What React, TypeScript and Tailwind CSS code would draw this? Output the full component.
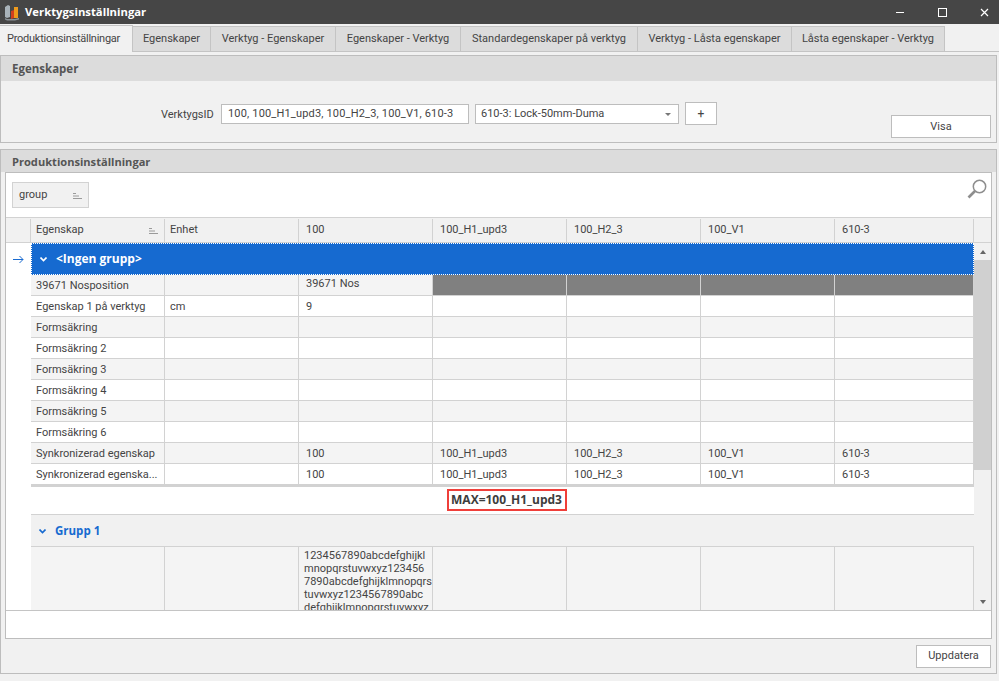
const COLS = 'grid grid-cols-[25px_134px_134px_134px_134px_134px_134px_139px]';

const tabs = [
  { label: 'Egenskaper', w: 'w-[78px]' },
  { label: 'Verktyg - Egenskaper', w: 'w-[125px]' },
  { label: 'Egenskaper - Verktyg', w: 'w-[125px]' },
  { label: 'Standardegenskaper på verktyg', w: 'w-[177px]' },
  { label: 'Verktyg - Låsta egenskaper', w: 'w-[154px]' },
  { label: 'Låsta egenskaper - Verktyg', w: 'w-[153px]' },
];

const columns = ['Enhet', '100', '100_H1_upd3', '100_H2_3', '100_V1', '610-3'];

const longText = [
  '1234567890abcdefghijkl',
  'mnopqrstuvwxyz123456',
  '7890abcdefghijklmnopqrs',
  'tuvwxyz1234567890abc',
  'defghijklmnopqrstuvwxyz',
];

type Row = { cells: string[]; dark?: boolean };

const rows: Row[] = [
  { cells: ['39671 Nosposition', '', '39671 Nos'], dark: true },
  { cells: ['Egenskap 1 på verktyg', 'cm', '9', '', '', '', ''] },
  { cells: ['Formsäkring', '', '', '', '', '', ''] },
  { cells: ['Formsäkring 2', '', '', '', '', '', ''] },
  { cells: ['Formsäkring 3', '', '', '', '', '', ''] },
  { cells: ['Formsäkring 4', '', '', '', '', '', ''] },
  { cells: ['Formsäkring 5', '', '', '', '', '', ''] },
  { cells: ['Formsäkring 6', '', '', '', '', '', ''] },
  { cells: ['Synkronizerad egenskap', '', '100', '100_H1_upd3', '100_H2_3', '100_V1', '610-3'] },
  { cells: ['Synkronizerad egenska...', '', '100', '100_H1_upd3', '100_H2_3', '100_V1', '610-3'] },
];

function SortIcon() {
  return (
    <svg width="9" height="8" viewBox="0 0 9 8" className="shrink-0">
      <path d="M0 1.5h3M0 4h6M0 6.5h9" stroke="#9a9a9a" strokeWidth="1" fill="none" />
    </svg>
  );
}

function Chevron({ color }: { color: string }) {
  return (
    <svg width="7" height="5" viewBox="0 0 7 5" className="shrink-0">
      <path d="M0.5 0.5L3.5 3.5L6.5 0.5" stroke={color} strokeWidth="1.6" fill="none" />
    </svg>
  );
}

function Logo() {
  return (
    <svg width="16" height="17" viewBox="0 0 16 17" className="shrink-0">
      <path d="M1 3l3-2 2 1v11l-3 1-2-1z" fill="#a9b3ba" />
      <path d="M7 7l3-1v8l-3 1z" fill="#d2401f" />
      <path d="M10 3h4v11h-4z" fill="#ee9a1c" />
      <path d="M1 14l2 1 8 0 4-1v1.5l-4 1H3l-2-1z" fill="#8b9297" />
    </svg>
  );
}

function GridRow({ row, index }: { row: Row; index: number }) {
  const bg = index % 2 === 0 ? 'bg-[#f4f4f4]' : 'bg-white';
  return (
    <div className={`${COLS} h-[21px] text-[11px] text-[#444]`}>
      <div className="bg-white" />
      {row.cells.map((c, i) => (
        <div
          key={i}
          className={`${bg} border-r border-b border-[#d2d2d2] whitespace-nowrap overflow-hidden ${
            i < 2 ? 'pl-[5px]' : 'pl-[7px]'
          } ${row.dark && i === 2 ? 'leading-[17px]' : 'leading-[21px]'}`}
        >
          {c}
        </div>
      ))}
      {row.dark &&
        [0, 1, 2, 3].map((i) => <div key={i} className="bg-[#808080] border-r border-b border-[#d2d2d2]" />)}
    </div>
  );
}

export default function App() {
  return (
    <div className="w-[999px] h-[681px] overflow-hidden bg-[#f1f1f1] flex flex-col text-[#444] font-['Roboto','Open_Sans',sans-serif]">
      {/* titelrad */}
      <div className="h-[24px] shrink-0 bg-[#464646] flex items-center pl-[4px] text-white">
        <Logo />
        <span className="ml-[5px] text-[11.3px] font-bold font-['Open_Sans',sans-serif]">Verktygsinställningar</span>
        <div className="ml-auto flex items-center gap-[12px]">
          <div className="w-[30px] flex justify-center">
            <div className="w-[8px] h-px bg-white" />
          </div>
          <div className="w-[30px] flex justify-center">
            <div className="w-[9px] h-[9px] border border-white" />
          </div>
          <div className="w-[30px] flex justify-center">
            <svg width="9" height="9" viewBox="0 0 9 9">
              <path d="M1 1l7 7M8 1l-7 7" stroke="#fff" strokeWidth="1.2" />
            </svg>
          </div>
        </div>
      </div>

      {/* flikar */}
      <div className="h-[28px] shrink-0 flex items-end border-b border-[#c4c4c4] bg-[#f1f1f1]">
        <div className="w-[133px] h-[27px] -mb-px bg-[#f1f1f1] border-t border-r border-[#c4c4c4] pl-[7px] flex items-center text-[11px] tracking-[-0.25px] whitespace-nowrap">
          Produktionsinställningar
        </div>
        {tabs.map((t) => (
          <div
            key={t.label}
            className={`${t.w} h-[25px] bg-[#dcdcdc] border-t border-r border-[#c4c4c4] flex items-center justify-center text-[11px] whitespace-nowrap`}
          >
            {t.label}
          </div>
        ))}
      </div>

      {/* egenskaper */}
      <div className="mt-[3px] mr-[2px] h-[88px] shrink-0 border border-[#bdbdbd] flex flex-col">
        <div className="h-[25px] bg-[#dcdcdc] pl-[11px] flex items-center text-[11.5px] font-bold text-[#555] font-['Open_Sans',sans-serif]">Egenskaper</div>
        <div className="flex-1 relative flex items-start pt-[23px] pl-[160px]">
          <span className="w-[60px] text-[11px] mt-[3px]">VerktygsID</span>
          <div className="w-[248px] h-[20px] bg-white border border-[#bdbdbd] pl-[6px] flex items-center text-[11px] tracking-[0.17px] whitespace-nowrap">
            100, 100_H1_upd3, 100_H2_3, 100_V1, 610-3
          </div>
          <div className="w-[204px] h-[20px] ml-[6px] bg-white border border-[#bdbdbd] pl-[5px] pr-[7px] flex items-center justify-between text-[11px]">
            <span>610-3: Lock-50mm-Duma</span>
            <span className="w-0 h-0 border-x-[3px] border-x-transparent border-t-[3px] border-t-[#777]" />
          </div>
          <div className="w-[32px] h-[23px] -mt-[2px] ml-[6px] bg-white border border-[#bdbdbd] flex items-center justify-center text-[12px]">+</div>
          <div className="absolute right-[5px] bottom-[4px] w-[100px] h-[23px] pt-px bg-white border border-[#bdbdbd] flex items-center justify-center text-[11px]">Visa</div>
        </div>
      </div>

      {/* produktionsinställningar */}
      <div className="mt-[6px] mr-[2px] h-[525px] shrink-0 border border-[#bdbdbd] flex flex-col">
        <div className="h-[22px] shrink-0 bg-[#dcdcdc] pl-[11px] pt-[2px] flex items-center text-[11.1px] font-bold text-[#555] font-['Open_Sans',sans-serif]">Produktionsinställningar</div>
        <div className="mx-[4px] w-[987px] h-[467px] bg-white border border-[#bdbdbd] flex flex-col">
          <div className="h-[44px] shrink-0 relative pt-[9px] pl-[6px]">
            <div className="w-[77px] h-[26px] pt-px bg-[#f1f1f1] border border-[#d2d2d2] flex items-center justify-between pl-[6px] pr-[6px] text-[11px]">
              group
              <SortIcon />
            </div>
            <svg width="20" height="20" viewBox="0 0 20 20" className="absolute right-[4px] top-[6px]">
              <circle cx="12.5" cy="7.5" r="6.2" fill="none" stroke="#8e8e8e" strokeWidth="1.5" />
              <path d="M8 12L1.5 18.5" stroke="#8e8e8e" strokeWidth="2.6" />
            </svg>
          </div>

          <div className="flex">
            <div className="w-[968px] flex flex-col shrink-0">
              <div className={`${COLS} h-[26px] pt-px border-y border-[#d2d2d2] bg-[#f1f1f1] text-[11px]`}>
                <div className="border-r border-[#d2d2d2]" />
                <div className="border-r border-[#d2d2d2] pl-[5px] pr-[6px] flex items-center justify-between">
                  Egenskap
                  <SortIcon />
                </div>
                {columns.map((c, i) => (
                  <div key={c} className={`border-r border-[#d2d2d2] flex items-center ${i === 0 ? 'pl-[5px]' : 'pl-[7px]'}`}>
                    {c}
                  </div>
                ))}
              </div>

              <div className={`${COLS} h-[32px]`}>
                <div className="bg-white flex items-center justify-center">
                  <svg width="11" height="9" viewBox="0 0 11 9">
                    <path d="M0 4.5h10M6.5 1l3.5 3.5L6.5 8" stroke="#1a6bd0" fill="none" />
                  </svg>
                </div>
                <div className="col-span-7 bg-[#166ad0] border border-dotted border-white flex items-center pl-[8px] text-white font-bold text-[12px] font-['Open_Sans',sans-serif]">
                  <Chevron color="#ffffff" />
                  <span className="ml-[9px]">&lt;Ingen grupp&gt;</span>
                </div>
              </div>

              {rows.map((r, i) => (
                <GridRow key={i} row={r} index={i} />
              ))}

              <div className="h-[30px] ml-[25px] bg-white border-y border-y-[#d2d2d2] border-t-2 flex items-center justify-center pl-[8px]">
                <span className="w-[120px] h-[22px] -mt-[2px] border-2 border-[#ef3f3a] flex items-center justify-center text-[12px] font-bold text-[#3d3d3d] font-['Open_Sans',sans-serif]">MAX=100_H1_upd3</span>
              </div>

              <div className="h-[32px] pt-px ml-[25px] bg-[#f1f1f1] border-b border-[#d2d2d2] flex items-center pl-[8px] text-[#166ad0] font-bold text-[11.5px] font-['Open_Sans',sans-serif]">
                <Chevron color="#166ad0" />
                <span className="ml-[9px]">Grupp 1</span>
              </div>

              <div className={`${COLS} h-[63px] text-[11px]`}>
                <div className="bg-white" />
                <div className="bg-[#f4f4f4] border-r border-[#d2d2d2]" />
                <div className="bg-[#f4f4f4] border-r border-[#d2d2d2]" />
                <div className="bg-[#f4f4f4] border-r border-[#d2d2d2] pl-[5px] pt-[2px] leading-[13px] overflow-hidden">
                  {longText.map((l) => (
                    <div key={l} className="whitespace-nowrap">{l}</div>
                  ))}
                </div>
                {[0, 1, 2, 3].map((i) => (
                  <div key={i} className="bg-[#f4f4f4] border-r border-[#d2d2d2]" />
                ))}
              </div>
            </div>

            {/* rullningslist */}
            <div className="w-[17px] shrink-0 bg-[#f1f1f1] flex flex-col items-center">
              <div className="h-[26px] w-full border-y border-[#d2d2d2]" />
              <div className="h-[17px] w-full flex items-center justify-center">
                <span className="w-0 h-0 border-x-[3px] border-x-transparent border-b-[4px] border-b-[#666]" />
              </div>
              <div className="w-full h-[210px] bg-[#d0d0d0]" />
              <div className="flex-1" />
              <div className="h-[17px] w-full flex items-center justify-center">
                <span className="w-0 h-0 border-x-[3px] border-x-transparent border-t-[4px] border-t-[#666]" />
              </div>
            </div>
          </div>

          <div className="flex-1 border-t border-[#c4c4c4] bg-white" />
        </div>
        <div className="flex-1 flex items-center justify-end pr-[5px]">
          <div className="w-[75px] h-[23px] pt-px bg-white border border-[#bdbdbd] flex items-center justify-center text-[11px]">Uppdatera</div>
        </div>
      </div>
    </div>
  );
}
